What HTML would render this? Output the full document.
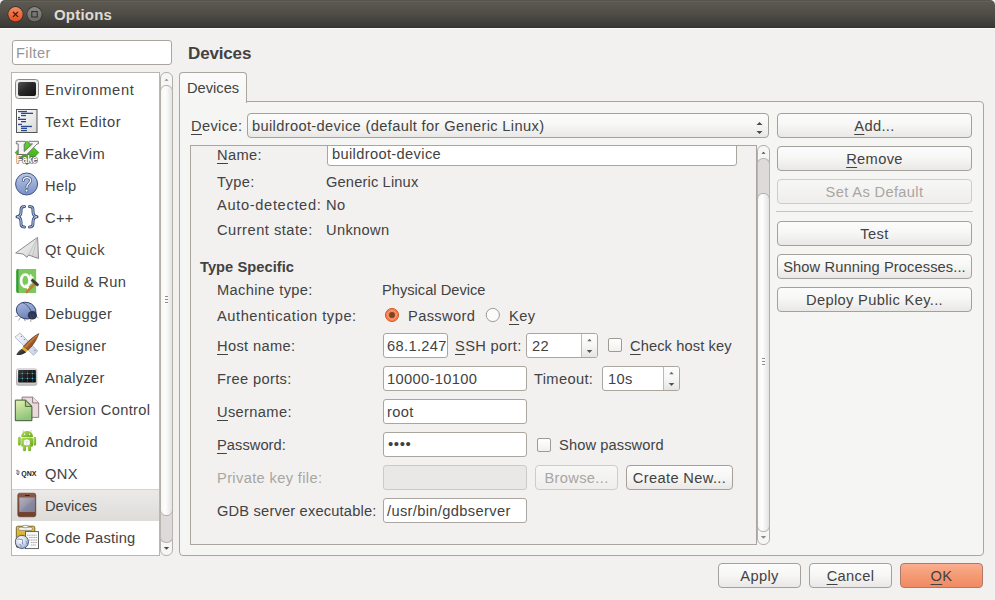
<!DOCTYPE html>
<html><head><meta charset="utf-8"><style>
*{margin:0;padding:0;box-sizing:border-box}
html,body{width:995px;height:600px;overflow:hidden;background:#f2f1f0}
body{position:relative;font-family:"Liberation Sans",sans-serif;font-size:14.67px;color:#424242}
.a{position:absolute}
.t{position:absolute;line-height:16px;white-space:nowrap;letter-spacing:0.35px}
.u{text-decoration:underline;text-underline-offset:3px;text-decoration-thickness:1px}
.box{position:absolute;border:1px solid #aaa69f;border-radius:3px;background:#fff}
.btn{position:absolute;border:1px solid #a4a09a;border-radius:4px;background:linear-gradient(#fcfcfc 0%,#f7f7f6 45%,#e9e8e6 100%);text-align:center;line-height:24px;white-space:nowrap;letter-spacing:0.35px}
.dis{color:#a8a6a2;border-color:#cfccc8;background:linear-gradient(#f7f7f6,#efeeed)}
svg{position:absolute;overflow:visible}
</style></head><body>
<div class="a" style="left:0;top:0;width:995px;height:28px;background:linear-gradient(#57544d 0px,#5b5850 3px,#524f49 12px,#45433e 20px,#3d3b37 26px,#33322e 28px);border-radius:5px 5px 0 0"></div>
<div class="a" style="left:0;top:28px;width:995px;height:1px;background:#fafaf9"></div>
<div class="a" style="left:4px;top:1px;width:987px;height:1px;background:#64615a"></div>
<svg style="left:0;top:0" width="60" height="28"><defs><linearGradient id="cl" x1="0" y1="0" x2="0" y2="1"><stop offset="0" stop-color="#f58a64"/><stop offset="1" stop-color="#e4501a"/></linearGradient><linearGradient id="mx" x1="0" y1="0" x2="0" y2="1"><stop offset="0" stop-color="#8a8984"/><stop offset="1" stop-color="#6a6964"/></linearGradient></defs><circle cx="15.5" cy="14.3" r="8" fill="#2e2d2a"/><circle cx="15.5" cy="14.3" r="7.2" fill="url(#cl)"/><path d="M13 11.8 L18 16.8 M18 11.8 L13 16.8" stroke="#2a1a12" stroke-width="1.2"/><circle cx="34.5" cy="14.3" r="8" fill="#2e2d2a"/><circle cx="34.5" cy="14.3" r="7.2" fill="url(#mx)"/><rect x="31.8" y="11.6" width="5.4" height="5.4" fill="#777" stroke="#2a2a28" stroke-width="1"/></svg>
<div class="t" style="left:54px;top:7px;color:#dfdbd2;font-weight:bold;font-size:15px;letter-spacing:0.2px">Options</div>
<div class="box" style="left:12px;top:40px;width:160px;height:25px"></div>
<div class="t" style="left:16px;top:45px;color:#969696">Filter</div>
<div class="box" style="left:11px;top:72px;width:149px;height:484px;border-radius:0;border-color:#b9b6b0"></div>
<svg style="left:12px;top:73px" width="32" height="32" viewBox="0 0 32 32">
<defs><linearGradient id="envg" x1="0" y1="0" x2="1" y2="1"><stop offset="0" stop-color="#555"/><stop offset="0.45" stop-color="#2a2a2a"/><stop offset="1" stop-color="#111"/></linearGradient></defs>
<rect x="3.5" y="6.5" width="23" height="19" rx="3" fill="#ececec" stroke="#8a8a8a"/>
<rect x="6" y="9" width="18" height="14" rx="2" fill="url(#envg)"/>
</svg>
<div class="t" style="left:45px;top:82px;letter-spacing:0.65px">Environment</div>
<svg style="left:12px;top:105px" width="32" height="32" viewBox="0 0 32 32">
<defs><linearGradient id="teg" x1="0" y1="0" x2="1" y2="1"><stop offset="0" stop-color="#fff"/><stop offset="1" stop-color="#d8d8d8"/></linearGradient></defs>
<rect x="4.5" y="4.5" width="20.5" height="23" fill="url(#teg)" stroke="#555"/>
<rect x="6" y="5.9" width="9" height="1.3" fill="#2b4a8c"/><rect x="9" y="7.700000000000001" width="12" height="1.3" fill="#2b4a8c"/><rect x="9" y="9.9" width="5" height="1.3" fill="#2b4a8c"/><rect x="6" y="11.9" width="2" height="1.3" fill="#2b4a8c"/><rect x="6" y="13.700000000000001" width="8" height="1.3" fill="#2b4a8c"/><rect x="9" y="16.0" width="5" height="1.3" fill="#2b4a8c"/><rect x="6" y="18.799999999999997" width="4" height="1.3" fill="#2b4a8c"/><rect x="9" y="20.799999999999997" width="11" height="1.3" fill="#2b4a8c"/><rect x="9" y="22.7" width="6" height="1.3" fill="#2b4a8c"/><rect x="9" y="24.9" width="6" height="1.3" fill="#2b4a8c"/></svg>
<div class="t" style="left:45px;top:114px;letter-spacing:0.65px">Text Editor</div>
<svg style="left:12px;top:137px" width="32" height="32" viewBox="0 0 32 32">
<defs><linearGradient id="fvg" x1="0" y1="0" x2="0" y2="1"><stop offset="0" stop-color="#62d82c"/><stop offset="1" stop-color="#3a9c14"/></linearGradient></defs>
<path d="M15 3.9 L26.9 15.6 L15 27.7 L3.1 15.6 Z" fill="url(#fvg)" stroke="#2f8a10" stroke-width="0.6" stroke-linejoin="round"/>
<path d="M4.3 4.3 H13.4 V6.9 H12.2 V14.5 L20.5 6.9 H16.9 V4.3 H26.4 V6.9 H25.2 L14.8 17.6 H6.2 V6.9 H4.3 Z" fill="#f4f4f4" stroke="#6b6b6b" stroke-width="0.9" stroke-linejoin="round"/>
<text x="4.5" y="25.8" textLength="21" lengthAdjust="spacingAndGlyphs" font-family="Liberation Sans" font-size="10" font-weight="bold" fill="#fff" stroke="#555" stroke-width="1.2" paint-order="stroke">Fake</text>
</svg>
<div class="t" style="left:45px;top:146px;">FakeVim</div>
<svg style="left:12px;top:169px" width="32" height="32" viewBox="0 0 32 32">
<defs><linearGradient id="hg" x1="0" y1="0" x2="0" y2="1"><stop offset="0" stop-color="#b9c8e6"/><stop offset="1" stop-color="#7890c4"/></linearGradient></defs>
<circle cx="14.6" cy="15" r="11" fill="url(#hg)" stroke="#3e5787" stroke-width="1"/>
<path d="M11.4 11.6 C11.4 9.6 13 8.6 15 8.6 C17.2 8.6 18.6 9.8 18.6 11.6 C18.6 14.2 14.8 14.6 14.8 18.4" fill="none" stroke="#4a5f8a" stroke-width="2.9" stroke-linecap="round"/>
<path d="M11.4 11.6 C11.4 9.6 13 8.6 15 8.6 C17.2 8.6 18.6 9.8 18.6 11.6 C18.6 14.2 14.8 14.6 14.8 18.4" fill="none" stroke="#f4f6fa" stroke-width="1.3" stroke-linecap="round"/>
<circle cx="14.6" cy="21.7" r="1.4" fill="#f4f6fa" stroke="#4a5f8a" stroke-width="0.8"/>
</svg>
<div class="t" style="left:45px;top:178px;">Help</div>
<svg style="left:12px;top:201px" width="32" height="32" viewBox="0 0 32 32">
<g fill="none" stroke-linecap="round" stroke-linejoin="round">
<path d="M12.5 5.5 C9 5.5 9 7 9 10.5 C9 14 8 15.5 5 15.8 C8 16.2 9 17.5 9 21 C9 24.5 9 26 12.5 26" stroke="#3a5282" stroke-width="3"/>
<path d="M12.5 5.5 C9 5.5 9 7 9 10.5 C9 14 8 15.5 5 15.8 C8 16.2 9 17.5 9 21 C9 24.5 9 26 12.5 26" stroke="#c9d3e6" stroke-width="1"/>
<path d="M17.5 5.5 C21 5.5 21 7 21 10.5 C21 14 22 15.5 25 15.8 C22 16.2 21 17.5 21 21 C21 24.5 21 26 17.5 26" stroke="#3a5282" stroke-width="3"/>
<path d="M17.5 5.5 C21 5.5 21 7 21 10.5 C21 14 22 15.5 25 15.8 C22 16.2 21 17.5 21 21 C21 24.5 21 26 17.5 26" stroke="#c9d3e6" stroke-width="1"/>
</g>
</svg>
<div class="t" style="left:45px;top:210px;">C++</div>
<svg style="left:12px;top:233px" width="32" height="32" viewBox="0 0 32 32">
<defs><linearGradient id="qqg" x1="0" y1="0" x2="1" y2="1"><stop offset="0" stop-color="#fbfbfb"/><stop offset="1" stop-color="#cfcfcf"/></linearGradient></defs>
<path d="M25.6 4.3 L3.7 20 L11 21 L15 24.4 L16.5 22 L26.5 25.5 Z" fill="url(#qqg)" stroke="#7f7f7f" stroke-width="0.9" stroke-linejoin="round"/>
<path d="M25.6 4.3 L16.5 22 M25.6 4.3 L20.5 23" stroke="#a8a8a8" stroke-width="0.5" fill="none"/>
</svg>
<div class="t" style="left:45px;top:242px;">Qt Quick</div>
<svg style="left:12px;top:265px" width="32" height="32" viewBox="0 0 32 32">
<path d="M6 4.1 H24.1 V27.9 H6 Q4.3 27.9 4.3 26 V6 Q4.3 4.1 6 4.1 Z" fill="#7cc85c"/>
<path d="M6 4.1 Q4.3 4.1 4.3 6 V26 Q4.3 27.9 6 27.9 H6.5 V4.1 Z" fill="#2f9a3a"/>
<ellipse cx="13.3" cy="15.7" rx="4.2" ry="6.2" fill="none" stroke="#fff" stroke-width="2.6"/>
<path d="M14 20.5 L16.5 24" stroke="#fff" stroke-width="2.2" stroke-linecap="round"/>
<path d="M18.7 9.5 V19 M17.3 12.5 H21.5" stroke="#fff" stroke-width="1.8"/>
<path d="M14.6 27 L24 17.8" stroke="#c77a3a" stroke-width="2.6" stroke-linecap="round"/>
<path d="M19 15.6 L20.6 14 L27 19.6 L25.2 21.2 Z" fill="#3a3a3a" stroke="#222" stroke-width="0.5"/>
</svg>
<div class="t" style="left:45px;top:274px;">Build &amp; Run</div>
<svg style="left:12px;top:297px" width="32" height="32" viewBox="0 0 32 32">
<defs><linearGradient id="dbg" x1="0" y1="0" x2="0.6" y2="1"><stop offset="0" stop-color="#b0c0e2"/><stop offset="1" stop-color="#6a82b8"/></linearGradient></defs>
<g stroke="#8a8a8a" stroke-width="0.8" fill="none"><path d="M6 19 L3.2 19.6 M8.2 20.8 L6.5 23.5 M12.5 22 L13.2 24.2 M18.5 22.5 L19 25 M23.5 19 L26.5 20.8"/></g>
<ellipse cx="14.1" cy="13.6" rx="9.9" ry="8.3" fill="url(#dbg)" stroke="#2e3f66" stroke-width="0.9" transform="rotate(14 14.1 13.6)"/>
<path d="M10.5 5.6 C14.5 7 18 10.5 19.5 15.5" stroke="#2e3f66" stroke-width="0.7" fill="none"/>
<ellipse cx="20.4" cy="18.2" rx="4.6" ry="4.3" fill="#2c3450"/>
<path d="M18.5 17 L19.5 22.5 M21 17 L22.2 21.5" stroke="#55607a" stroke-width="0.5"/>
</svg>
<div class="t" style="left:45px;top:306px;">Debugger</div>
<svg style="left:12px;top:329px" width="32" height="32" viewBox="0 0 32 32">
<defs><linearGradient id="rg" x1="0" y1="0" x2="1" y2="0"><stop offset="0" stop-color="#f2f5fa"/><stop offset="1" stop-color="#c9d2e4"/></linearGradient>
<linearGradient id="brg" x1="0" y1="0" x2="1" y2="1"><stop offset="0" stop-color="#d08a4a"/><stop offset="0.5" stop-color="#a8602a"/><stop offset="1" stop-color="#5a2e10"/></linearGradient>
<linearGradient id="bkg" x1="0" y1="0" x2="1" y2="1"><stop offset="0" stop-color="#666"/><stop offset="1" stop-color="#111"/></linearGradient></defs>
<path d="M2.9 8.1 L8 3.9 L25.7 22 L21.5 26.3 Z" fill="url(#rg)" stroke="#a3aec6" stroke-width="0.8" stroke-linejoin="round"/>
<g fill="#6b7590"><circle cx="9.4" cy="7.5" r="0.6"/><circle cx="12.4" cy="10.5" r="0.6"/><circle cx="23" cy="21.5" r="0.6"/></g>
<path d="M26.8 4.6 C25.5 9 21.5 16.5 15.8 21.3 L11.2 17.8 C15.5 12.5 22 7 26.8 4.6 Z" fill="url(#brg)" stroke="#3a1a06" stroke-width="0.5"/>
<path d="M25.5 6.2 C22 9 17 14 13.5 18.2" stroke="#e9b27a" stroke-width="0.7" fill="none" opacity="0.8"/>
<path d="M11.2 17.8 L15.8 21.3 L14.2 23.2 L9.8 19.8 Z" fill="#e2aa2a"/>
<path d="M9.8 19.8 L14.2 23.2 C12 25 8 26.5 4.3 26 C5.5 23.5 7.5 21 9.8 19.8 Z" fill="url(#bkg)"/>
</svg>
<div class="t" style="left:45px;top:338px;">Designer</div>
<svg style="left:12px;top:361px" width="32" height="32" viewBox="0 0 32 32">
<defs><linearGradient id="ang" x1="0" y1="0" x2="0" y2="1"><stop offset="0" stop-color="#fafafa"/><stop offset="1" stop-color="#c4c4c4"/></linearGradient>
<linearGradient id="scg" x1="0" y1="0" x2="1" y2="1"><stop offset="0" stop-color="#3a3a3a"/><stop offset="0.5" stop-color="#1a1a1a"/><stop offset="1" stop-color="#0a0a0a"/></linearGradient></defs>
<rect x="4.5" y="8" width="20.3" height="16.2" rx="1.5" fill="url(#ang)" stroke="#9a9a9a" stroke-width="0.7"/>
<rect x="6.1" y="9" width="17.8" height="12.6" rx="0.8" fill="url(#scg)"/>
<g stroke="#2f6f80" stroke-width="0.5"><path d="M10.3 9.2 V21.4 M15.5 9.2 V21.4 M20.4 9.2 V21.4 M6.3 12.5 H23.7 M6.3 17.4 H23.7"/></g>
<g fill="#5cc0da"><circle cx="10.3" cy="12.5" r="0.6"/><circle cx="15.5" cy="12.5" r="0.6"/><circle cx="20.4" cy="12.5" r="0.6"/><circle cx="10.3" cy="17.4" r="0.6"/><circle cx="15.5" cy="17.4" r="0.6"/><circle cx="20.4" cy="17.4" r="0.6"/></g>
</svg>
<div class="t" style="left:45px;top:370px;">Analyzer</div>
<svg style="left:12px;top:393px" width="32" height="32" viewBox="0 0 32 32">
<defs><linearGradient id="vg1" x1="0" y1="0" x2="0.3" y2="1"><stop offset="0" stop-color="#e6f0b0"/><stop offset="1" stop-color="#8fc47a"/></linearGradient></defs>
<path d="M10.1 4.1 H20.6 L26.7 9.9 V24.4 H10.1 Z" fill="#ecd9db" stroke="#857376" stroke-width="0.9"/>
<path d="M20.6 4.1 V9.9 H26.7" fill="#f1e3e4" stroke="#857376" stroke-width="0.9"/>
<path d="M3.3 7.1 H13.4 L19.9 13.4 V27.7 H3.3 Z" fill="url(#vg1)" stroke="#3f5a36" stroke-width="1"/>
<path d="M13.4 7.1 V13.4 H19.9 Z" fill="#a8d48c" stroke="#3f5a36" stroke-width="0.9"/>
</svg>
<div class="t" style="left:45px;top:402px;">Version Control</div>
<svg style="left:12px;top:425px" width="32" height="32" viewBox="0 0 32 32">
<defs><linearGradient id="ag" x1="0" y1="0" x2="1" y2="1"><stop offset="0" stop-color="#b2de5a"/><stop offset="1" stop-color="#6ea622"/></linearGradient></defs>
<g fill="url(#ag)">
<path d="M9.2 12 C9.2 8.2 11.5 6 15.1 6 C18.7 6 21 8.2 21 12 Z"/>
<rect x="9.2" y="12.6" width="11.8" height="9.2" rx="1.6"/>
<rect x="5.9" y="11.8" width="2.8" height="8.9" rx="1.4"/>
<rect x="21.3" y="11.8" width="2.8" height="8.9" rx="1.4"/>
<rect x="10.8" y="20" width="3.2" height="6.3" rx="1.5"/>
<rect x="15.9" y="20" width="3.2" height="6.3" rx="1.5"/>
</g>
<path d="M11.6 6.8 L10.8 5.2 M18.6 6.8 L19.4 5.2" stroke="#9ccc44" stroke-width="0.7"/>
<circle cx="12.6" cy="9.3" r="0.7" fill="#fff"/><circle cx="17.6" cy="9.3" r="0.7" fill="#fff"/>
<path d="M11.8 15.6 L14.8 14.2 L17.8 15.6 V19.5 L14.8 20.8 L11.8 19.5 Z" fill="#fbfbfb"/>
<path d="M11.8 15.6 L14.8 17 L17.8 15.6 M14.8 17 V20.8" stroke="#c8c8c8" stroke-width="0.5" fill="none"/>
</svg>
<div class="t" style="left:45px;top:434px;">Android</div>
<svg style="left:12px;top:457px" width="32" height="32" viewBox="0 0 32 32">
<text x="9.2" y="18.8" textLength="15.2" lengthAdjust="spacingAndGlyphs" font-family="Liberation Sans" font-weight="bold" font-size="7.2" fill="#222">QNX</text>
<path d="M4.2 13.4 H6.5 M4.6 14.8 H7.8 M4.2 16.2 H7.6 M5 17.5 H7" stroke="#555" stroke-width="0.8"/>
</svg>
<div class="t" style="left:45px;top:466px;">QNX</div>
<div class="a" style="left:12px;top:489px;width:147px;height:32px;background:linear-gradient(#ebeae8,#dedcd9);border-top:1px solid #d5d3cf"></div>
<svg style="left:12px;top:489px" width="32" height="32" viewBox="0 0 32 32">
<defs><linearGradient id="dvg" x1="0" y1="0" x2="1" y2="1"><stop offset="0" stop-color="#b4b2c0"/><stop offset="0.45" stop-color="#9a99ac"/><stop offset="0.55" stop-color="#8a8aa0"/><stop offset="1" stop-color="#7c7c92"/></linearGradient>
<linearGradient id="dvb" x1="0" y1="0" x2="0" y2="1"><stop offset="0" stop-color="#8a5a46"/><stop offset="1" stop-color="#6e3f2c"/></linearGradient></defs>
<rect x="5.8" y="4.2" width="18" height="23.6" rx="2" fill="url(#dvb)" stroke="#5a3222" stroke-width="0.6"/>
<rect x="7.3" y="8.5" width="15.6" height="14.5" fill="url(#dvg)"/>
<rect x="12.9" y="6" width="4.9" height="0.9" rx="0.4" fill="#3a2016"/>
</svg>
<div class="t" style="left:45px;top:498px;letter-spacing:0px">Devices</div>
<svg style="left:12px;top:521px" width="32" height="32" viewBox="0 0 32 32">
<defs><radialGradient id="gg" cx="0.4" cy="0.35" r="0.7"><stop offset="0" stop-color="#fff"/><stop offset="0.6" stop-color="#cdd6e8"/><stop offset="1" stop-color="#8ea2c6"/></radialGradient>
<linearGradient id="cbg" x1="0" y1="0" x2="0" y2="1"><stop offset="0" stop-color="#e9c440"/><stop offset="1" stop-color="#c99a1a"/></linearGradient></defs>
<rect x="4.3" y="5.2" width="18.5" height="21.3" rx="1.5" fill="url(#cbg)" stroke="#5a4a14" stroke-width="0.8"/>
<rect x="6.6" y="6.2" width="13.8" height="3.2" rx="1.4" fill="#f4f4f4" stroke="#555" stroke-width="0.5"/>
<rect x="10.8" y="4.3" width="5.4" height="2.4" rx="1.2" fill="#f4f4f4" stroke="#666" stroke-width="0.5"/>
<rect x="13.5" y="10.6" width="13" height="17" fill="#fafafa" stroke="#555" stroke-width="0.9"/>
<g stroke="#555" stroke-width="0.5" stroke-dasharray="1.2 0.5"><path d="M15 14.2 H25 M17 16.5 H25 M17 19 H25 M19 21.5 H25 M19 24 H24"/></g>
<circle cx="9.9" cy="20.9" r="6.6" fill="url(#gg)" stroke="#3c5482" stroke-width="0.9"/>
<path d="M5.5 18.5 C7 17.5 8.5 19 10 18.2 C11.5 19.5 9.5 21.5 11 23.5 M13.5 20 C14.8 20.5 15 22 14.5 23 M7.5 23.5 C8.5 22.8 9.5 24.5 9 26" stroke="#7d8fb5" stroke-width="1" fill="none"/>
</svg>
<div class="t" style="left:45px;top:530px;letter-spacing:0.2px">Code Pasting</div>
<div class="a" style="left:160px;top:72px;width:13px;height:484px;border:1px solid #b3b0aa;border-radius:6px;background:#f6f6f5"></div>
<div class="a" style="left:160px;top:510px;width:13px;height:33px;border:1px solid #b9b6b1;border-top:none;border-radius:0 0 6px 6px;background:#dcdbd9"></div>
<div class="a" style="left:160px;top:85px;width:13px;height:431px;border:1px solid #b3b0aa;border-radius:6px;background:linear-gradient(90deg,#f7f7f7,#fdfdfd 40%,#e4e3e1)"></div>
<svg style="left:160px;top:72px" width="13" height="484"><path d="M4.5 8.8 L6.5 6.8 L8.5 8.8 Z" fill="#8c8a86"/><path d="M3.8 475 L6.5 477.8 L9.2 475 Z" fill="#4a4a4a"/><rect x="5" y="224" width="3" height="1" fill="#8e8c88"/><rect x="5" y="225" width="3" height="1" fill="#fff"/><rect x="5" y="227" width="3" height="1" fill="#8e8c88"/><rect x="5" y="228" width="3" height="1" fill="#fff"/><rect x="5" y="230" width="3" height="1" fill="#8e8c88"/><rect x="5" y="231" width="3" height="1" fill="#fff"/></svg>
<div class="t" style="left:188px;top:46px;font-weight:bold;font-size:17px;letter-spacing:-0.15px">Devices</div>
<div class="a" style="left:179px;top:101px;width:805px;height:455px;border:1px solid #aaa69f;border-radius:0 4px 4px 4px;background:#f5f5f4"></div>
<div class="a" style="left:179px;top:72px;width:68px;height:31px;border:1px solid #aaa69f;border-bottom:none;border-radius:4px 4px 0 0;background:linear-gradient(#fbfbfb,#f5f5f4)"></div>
<div class="t" style="left:187px;top:80px;letter-spacing:0px">Devices</div>
<div class="t" style="left:191px;top:118px;"><span class="u">D</span>evice:</div>
<div class="btn" style="left:247px;top:113px;width:522px;height:25px;text-align:left"></div>
<div class="t" style="left:252px;top:118px;">buildroot-device (default for Generic Linux)</div>
<svg style="left:752px;top:116px" width="14" height="20"><path d="M4.5 8.9 L7.5 5.9 L10.5 8.9 Z M4.5 14.9 L7.5 17.9 L10.5 14.9 Z" fill="#4a4a4a"/></svg>
<div class="btn" style="left:777px;top:113px;width:195px;height:25px;"><span class="u">A</span>dd...</div>
<div class="btn" style="left:777px;top:146px;width:195px;height:25px;"><span class="u">R</span>emove</div>
<div class="btn dis" style="left:777px;top:179px;width:195px;height:25px;">Set As Default</div>
<div class="a" style="left:776px;top:211px;width:197px;height:1px;background:#c6c3be"></div>
<div class="btn" style="left:777px;top:221px;width:195px;height:25px;">Test</div>
<div class="btn" style="left:777px;top:254px;width:195px;height:25px;letter-spacing:0.1px">Show Running Processes...</div>
<div class="btn" style="left:777px;top:287px;width:195px;height:25px;">Deploy Public Key...</div>
<div class="a" style="left:190px;top:145px;width:567px;height:400px;border:1px solid #aaa69f;background:#f2f1f0;overflow:hidden" id="sa">
<div class="box" style="left:136px;top:-6px;width:410px;height:26px;"></div>
<div class="t" style="left:141px;top:0px;">buildroot-device</div>
<div class="t" style="left:26px;top:1px;"><span class="u">N</span>ame:</div>
<div class="t" style="left:26px;top:28px;">Type:</div>
<div class="t" style="left:135px;top:28px;;letter-spacing:0.15px">Generic Linux</div>
<div class="t" style="left:26px;top:51px;;letter-spacing:0.65px">Auto-detected:</div>
<div class="t" style="left:135px;top:51px;">No</div>
<div class="t" style="left:26px;top:76px;;letter-spacing:0.5px">Current state:</div>
<div class="t" style="left:135px;top:76px;">Unknown</div>
<div class="t" style="left:9px;top:113px;font-weight:bold;letter-spacing:0.05px">Type Specific</div>
<div class="t" style="left:26px;top:136px;">Machine type:</div>
<div class="t" style="left:191px;top:136px;;letter-spacing:0.0px">Physical Device</div>
<div class="t" style="left:26px;top:162px;letter-spacing:0.55px">Authentication type:</div>
<div class="t" style="left:217px;top:162px;">Password</div>
<div class="t" style="left:318px;top:162px;"><span class="u">K</span>ey</div>
<div class="t" style="left:26px;top:192px;"><span class="u">H</span>ost name:</div>
<div class="box" style="left:192px;top:187px;width:65px;height:25px;overflow:hidden"></div>
<div class="t" style="left:196px;top:192px;">68.1.247</div>
<div class="t" style="left:264px;top:192px;"><span class="u">S</span>SH port:</div>
<div class="box" style="left:335px;top:187px;width:72px;height:25px;"></div>
<div class="t" style="left:341px;top:192px;">22</div>
<div class="t" style="left:439px;top:192px;letter-spacing:0.1px"><span class="u">C</span>heck host key</div>
<div class="t" style="left:26px;top:225px;">Free ports:</div>
<div class="box" style="left:192px;top:220px;width:144px;height:25px;"></div>
<div class="t" style="left:196px;top:225px;">10000-10100</div>
<div class="t" style="left:343px;top:225px;">Timeout:</div>
<div class="box" style="left:411px;top:220px;width:78px;height:25px;"></div>
<div class="t" style="left:417px;top:225px;">10s</div>
<div class="t" style="left:26px;top:258px;"><span class="u">U</span>sername:</div>
<div class="box" style="left:192px;top:253px;width:144px;height:25px;"></div>
<div class="t" style="left:196px;top:258px;">root</div>
<div class="t" style="left:26px;top:291px;;letter-spacing:0.05px"><span class="u">P</span>assword:</div>
<div class="box" style="left:192px;top:286px;width:144px;height:25px;"></div>
<div class="t" style="left:197px;top:290px;letter-spacing:0.6px;font-size:15px">&#8226;&#8226;&#8226;&#8226;</div>
<div class="t" style="left:368px;top:291px;;letter-spacing:0.1px">Show password</div>
<div class="t" style="left:26px;top:324px;color:#a8a6a2">Private key file:</div>
<div class="box" style="left:192px;top:319px;width:144px;height:25px;background:#e9e8e6;border-color:#cdcac5"></div>
<div class="t" style="left:26px;top:357px;letter-spacing:0.18px">GDB server executable:</div>
<div class="box" style="left:192px;top:352px;width:144px;height:25px;"></div>
<div class="t" style="left:196px;top:357px;">/usr/bin/gdbserver</div>
</div>
<div class="btn dis" style="left:535px;top:465px;width:83px;height:25px;">Browse...</div>
<div class="btn" style="left:626px;top:465px;width:107px;height:25px;">Create New...</div>
<svg style="left:380px;top:300px" width="130" height="30"><defs><radialGradient id="rad" cx="0.5" cy="0.4" r="0.6"><stop offset="0" stop-color="#f89a6f"/><stop offset="1" stop-color="#e8622e"/></radialGradient></defs><circle cx="12" cy="15" r="6.6" fill="#f27d4b" stroke="#d9622f" stroke-width="1"/><circle cx="12" cy="15" r="4.3" fill="none" stroke="#f9a27c" stroke-width="1"/><circle cx="12" cy="15" r="2.9" fill="#7e4226"/><circle cx="112.8" cy="15" r="6.6" fill="#fbfbfb" stroke="#9e9a94" stroke-width="1"/></svg>
<div class="a" style="left:608px;top:338px;width:14px;height:14px;border:1px solid #9e9a94;border-radius:2px;background:linear-gradient(#fff,#f0f0ef)"></div>
<div class="a" style="left:537px;top:438px;width:14px;height:14px;border:1px solid #9e9a94;border-radius:2px;background:linear-gradient(#fff,#f0f0ef)"></div>
<div class="a" style="left:582px;top:334px;width:15px;height:23px;border-radius:0 3px 3px 0;background:linear-gradient(#fdfdfd,#f6f6f5 50%,#e6e5e3)"></div>
<svg style="left:581px;top:333px" width="17" height="25"><path d="M0.5 1 V24" stroke="#bdbab4"/><path d="M6.3 8.2 L8.5 5.8 L10.7 8.2 Z" fill="#6a6a6a"/><path d="M5.7 17 L8.5 19.9 L11.3 17 Z" fill="#555"/></svg>
<div class="a" style="left:664px;top:367px;width:15px;height:23px;border-radius:0 3px 3px 0;background:linear-gradient(#fdfdfd,#f6f6f5 50%,#e6e5e3)"></div>
<svg style="left:663px;top:366px" width="17" height="25"><path d="M0.5 1 V24" stroke="#bdbab4"/><path d="M6.3 8.2 L8.5 5.8 L10.7 8.2 Z" fill="#6a6a6a"/><path d="M5.7 17 L8.5 19.9 L11.3 17 Z" fill="#555"/></svg>
<div class="a" style="left:757px;top:145px;width:13px;height:400px;border:1px solid #b3b0aa;border-radius:6px;background:#f6f6f5"></div>
<div class="a" style="left:757px;top:158px;width:13px;height:40px;border:1px solid #b9b6b1;border-bottom:none;border-radius:6px 6px 0 0;background:#dcdbd9"></div>
<div class="a" style="left:757px;top:193px;width:13px;height:339px;border:1px solid #b3b0aa;border-radius:6px;background:linear-gradient(90deg,#f7f7f7,#fdfdfd 40%,#e4e3e1)"></div>
<svg style="left:757px;top:145px" width="13" height="400"><path d="M4.5 8.8 L6.5 6.8 L8.5 8.8 Z" fill="#4a4a4a"/><path d="M3.8 391 L6.5 393.8 L9.2 391 Z" fill="#8c8a86"/><rect x="5" y="213" width="3" height="1" fill="#8e8c88"/><rect x="5" y="214" width="3" height="1" fill="#fff"/><rect x="5" y="216" width="3" height="1" fill="#8e8c88"/><rect x="5" y="217" width="3" height="1" fill="#fff"/><rect x="5" y="219" width="3" height="1" fill="#8e8c88"/><rect x="5" y="220" width="3" height="1" fill="#fff"/></svg>
<div class="btn" style="left:718px;top:563px;width:83px;height:25px;">Apply</div>
<div class="btn" style="left:809px;top:563px;width:83px;height:25px;"><span class="u">C</span>ancel</div>
<div class="btn" style="left:900px;top:563px;width:83px;height:25px;background:linear-gradient(#fbae8f,#f59a74 50%,#f08a62);border-color:#b0786a"><span class="u">O</span>K</div>
</body></html>
